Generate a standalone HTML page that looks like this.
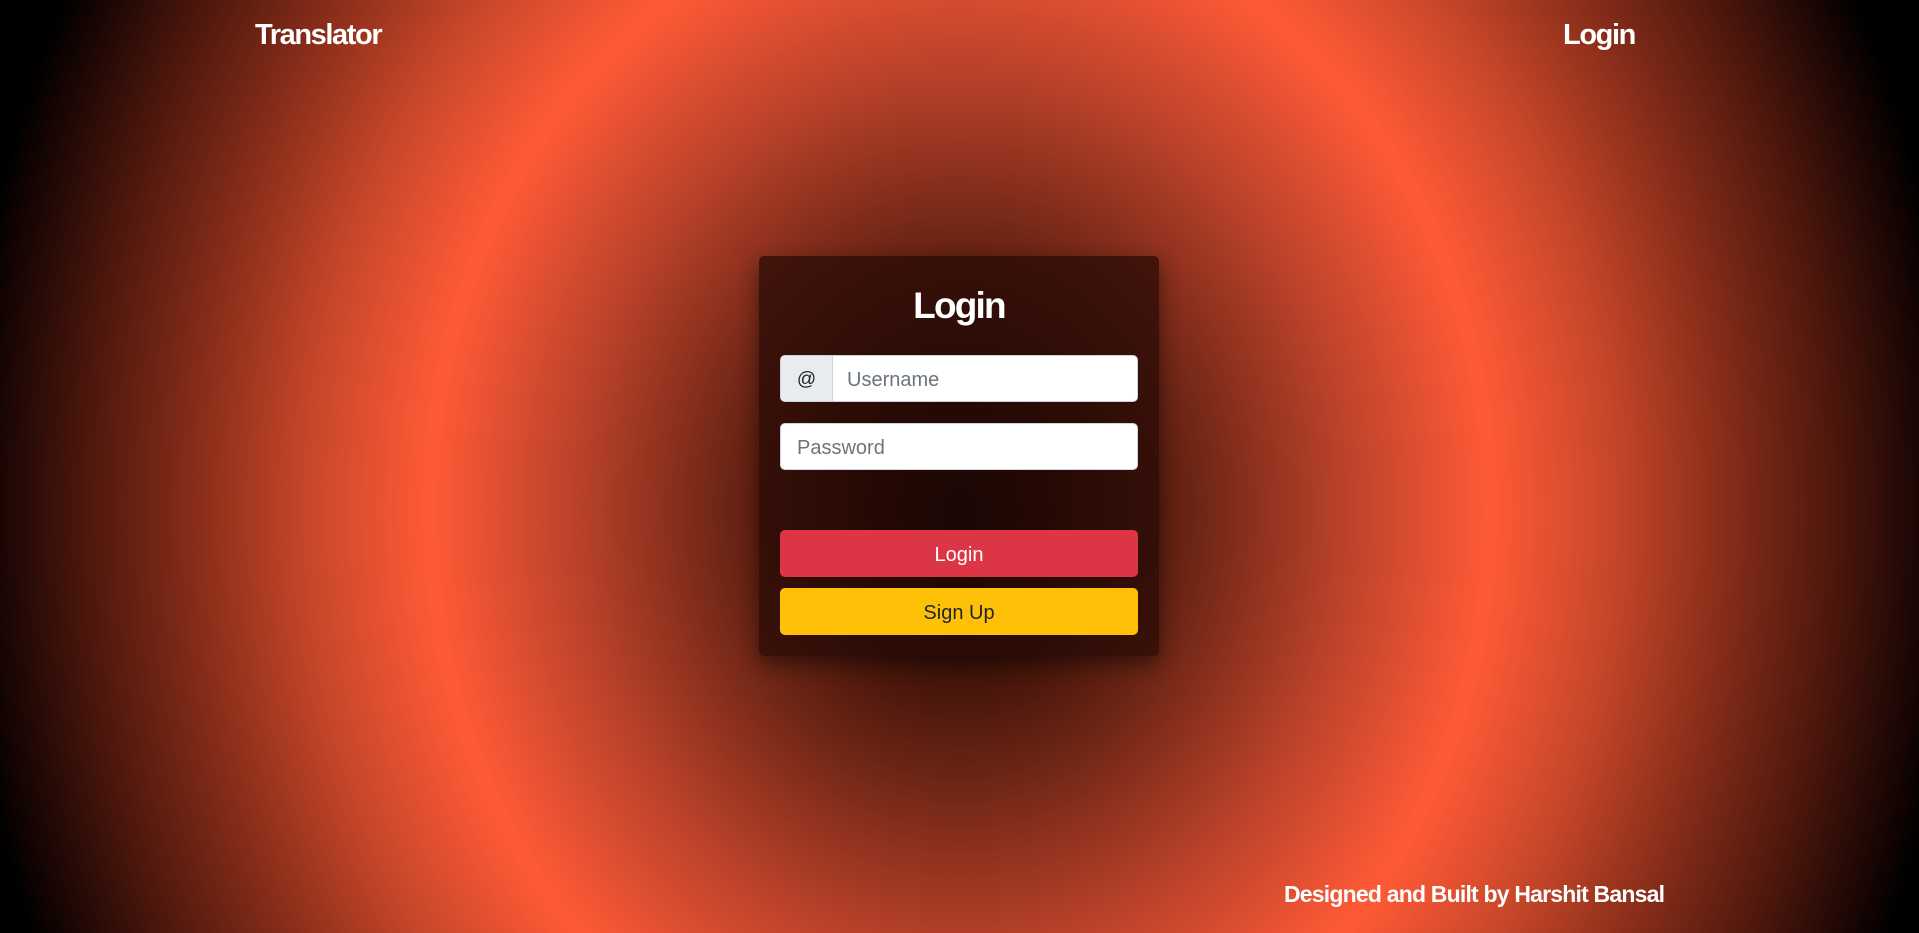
<!DOCTYPE html>
<html><head><meta charset="utf-8"><style>
html,body{margin:0;padding:0;width:1919px;height:933px;overflow:hidden}
body{position:relative;font-family:"Liberation Sans","DejaVu Sans",sans-serif;
background:radial-gradient(ellipse 1000px 1150px at 960px 510px,#000 0%,#2a0a04 9.5%,#6a2414 23%,#b8412a 38%,#ff5a36 53%,#c8472a 65%,#8a2e1a 76%,#4a160c 88%,#1a0604 96%,#000 100%);}
.nav{position:absolute;top:19px;color:#fff;font-weight:bold;font-size:29px;letter-spacing:-1.4px}
.foot{position:absolute;left:1284px;top:881px;color:#fff;font-weight:bold;font-size:23px;letter-spacing:-0.8px}
.card{position:absolute;left:759px;top:256px;width:400px;height:400px;border-radius:5px;
background:rgba(38,10,5,0.72);box-shadow:0 8px 20px rgba(0,0,0,0.45)}
.card h1{margin:0;position:absolute;top:29px;width:100%;text-align:center;color:#fff;font-size:37px;letter-spacing:-1.8px}
.in{position:absolute;left:21px;width:358px;height:47px;background:#fff;border:1px solid #ced4da;border-radius:5px;box-sizing:border-box;font-size:20px;color:#6c757d;line-height:48px}
.add{position:absolute;left:0;top:0;width:51px;height:45px;background:#e9ecef;border-right:1px solid #ced4da;border-radius:5px 0 0 5px;color:#212529;text-align:center;font-size:19px}
.btn{position:absolute;left:21px;width:358px;height:47px;border-radius:5px;text-align:center;line-height:50px;font-size:20px}
</style></head><body>
<div class="nav" style="left:255px">Translator</div>
<div class="nav" style="left:1563px">Login</div>
<div class="card">
<h1>Login</h1>
<div class="in" style="top:99px"><div class="add">@</div><span style="position:absolute;left:66px">Username</span></div>
<div class="in" style="top:167px"><span style="position:absolute;left:16px">Password</span></div>
<div class="btn" style="top:274px;background:#dc3545;color:#fff">Login</div>
<div class="btn" style="top:332px;background:#ffc107;color:#212529">Sign Up</div>
</div>
<div class="foot">Designed and Built by Harshit Bansal</div>
</body></html>
